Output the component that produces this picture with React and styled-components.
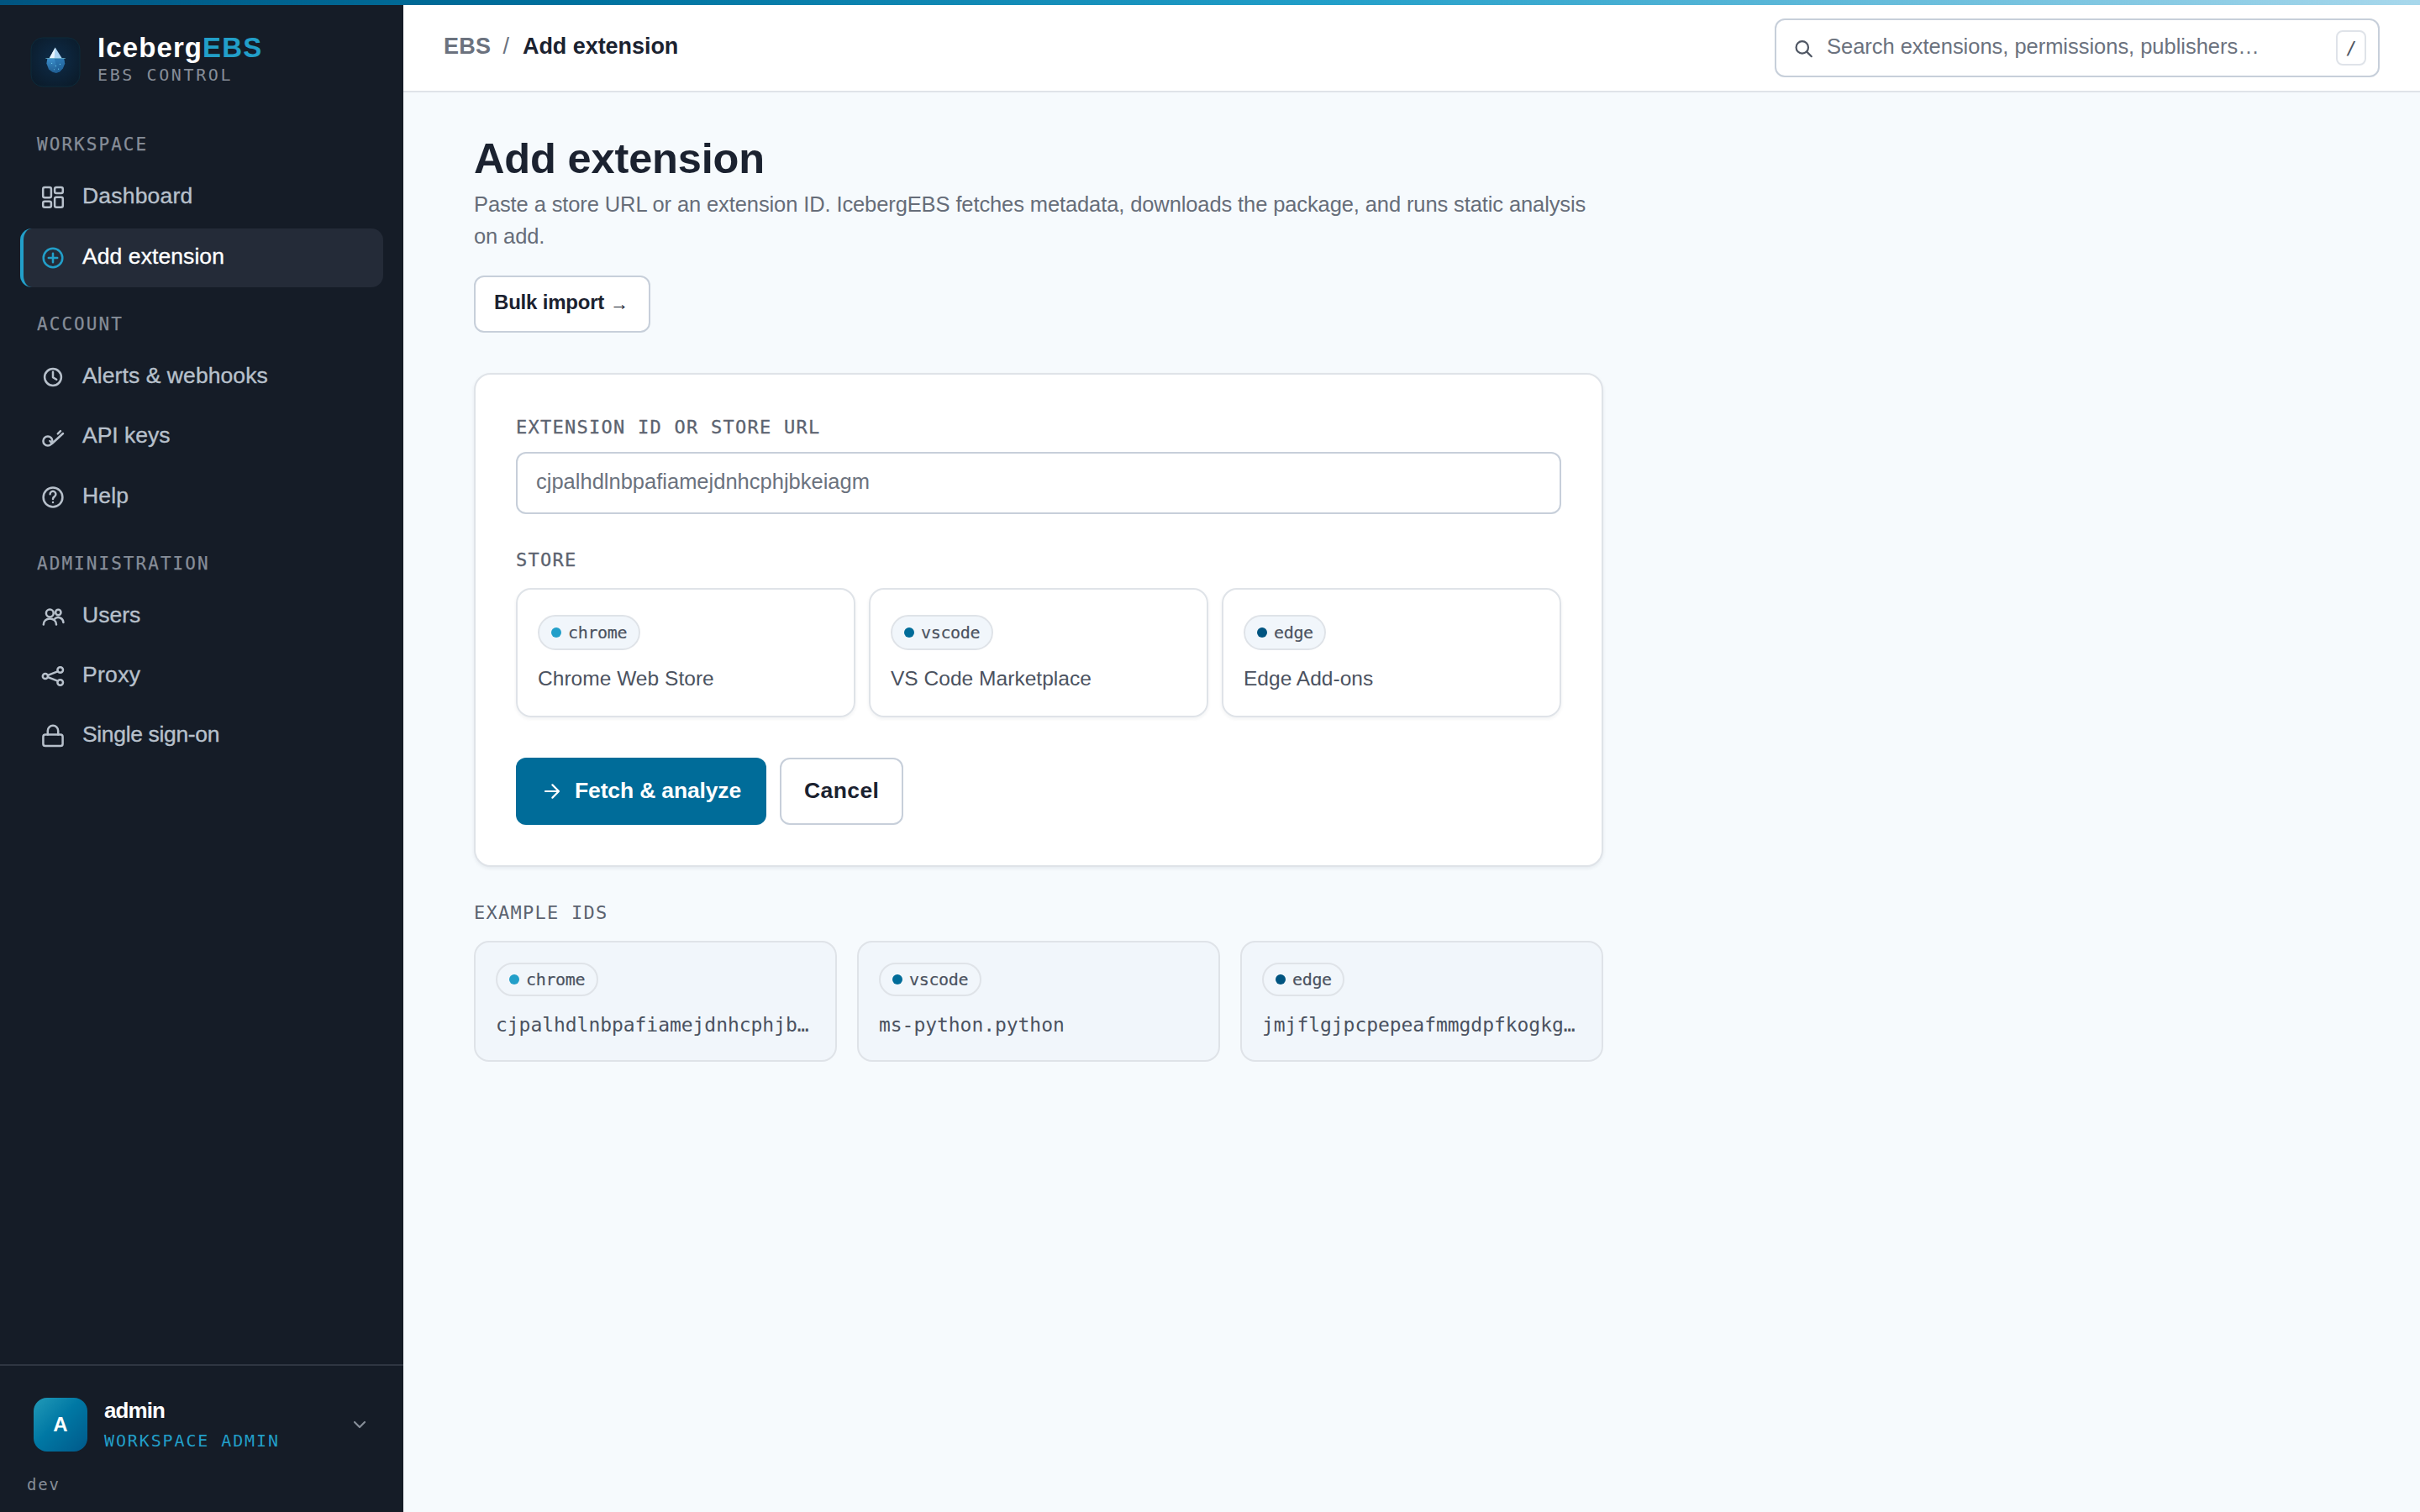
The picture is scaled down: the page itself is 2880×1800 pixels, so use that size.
import React from "react";
import styled, { createGlobalStyle, css } from "styled-components";

const sans = `"Liberation Sans", Arial, sans-serif`;
const mono = `"DejaVu Sans Mono", "Liberation Mono", monospace`;

const GlobalStyle = createGlobalStyle`
  *, *::before, *::after { box-sizing: border-box; }
  body { margin: 0; background: #f6fafd; font-family: ${sans}; color: #1b2230; }
  button, input { font-family: inherit; }
`;

const Page = styled.div`
  display: flex;
  flex-direction: column;
  width: 2880px;
  height: 1800px;
  overflow: hidden;
`;

const AccentBar = styled.div`
  flex: none;
  height: 6px;
  background: linear-gradient(90deg, #005480 0%, #0073a0 25%, #229fc9 55%, #a8d8ec 100%);
`;

const Shell = styled.div`
  flex: 1;
  display: grid;
  grid-template-columns: 480px 1fr;
  min-height: 0;
`;

const Sidebar = styled.aside`
  display: flex;
  flex-direction: column;
  background: #151c27;
`;

const Brand = styled.div`
  display: flex;
  gap: 20px;
  height: 151px;
  padding: 32px 36px 0;
`;

const LogoSlot = styled.div`
  padding-top: 6px;
  svg { display: block; }
`;

const BrandName = styled.div`
  font-size: 33px;
  line-height: 38px;
  font-weight: 700;
  letter-spacing: 1.1px;
  color: #ffffff;
  span { color: #229fc9; }
`;

const BrandSub = styled.div`
  font-family: ${mono};
  font-size: 20px;
  line-height: 26px;
  letter-spacing: 2.6px;
  color: #868d98;
`;

const NavSection = styled.nav`
  display: flex;
  flex-direction: column;
  gap: 1.2px;
  padding: 0 24px;
  margin-bottom: 29.2px;
`;

const NavLabel = styled.div`
  padding-left: 20px;
  margin-bottom: 12.2px;
  font-family: ${mono};
  font-size: 21px;
  line-height: 30px;
  height: 30px;
  letter-spacing: 2.05px;
  color: #868d98;
  -webkit-text-stroke: 0.25px currentColor;
`;

const NavItem = styled.a`
  display: flex;
  align-items: center;
  gap: 19px;
  height: 70px;
  padding-left: 19px;
  border-left: 4px solid ${(p) => (p.$active ? "#229fc9" : "transparent")};
  border-radius: 14px;
  background: ${(p) => (p.$active ? "#242b38" : "transparent")};
  color: ${(p) => (p.$active ? "#ffffff" : "#b7c0cb")};
  svg { color: ${(p) => (p.$active ? "#229fc9" : "#b7c0cb")}; }
`;

const NavText = styled.span`
  padding-bottom: 4px;
  font-size: 26.5px;
  line-height: 36px;
  letter-spacing: ${(p) => p.$track}px;
  -webkit-text-stroke: 0.35px currentColor;
`;

const SidebarFooter = styled.div`
  margin-top: auto;
  height: 176px;
  border-top: 2px solid #2f3642;
  padding: 38px 0 0 32px;
`;

const UserRow = styled.div`
  display: flex;
  align-items: center;
  gap: 20px;
  height: 64px;
  padding: 0 44px 0 8px;
`;

const Avatar = styled.div`
  display: grid;
  place-items: center;
  width: 64px;
  height: 64px;
  border-radius: 16px;
  background: linear-gradient(135deg, #229ab8 0%, #0078a4 45%, #00598a 100%);
  color: #ffffff;
  font-size: 24px;
  font-weight: 700;
`;

const UserText = styled.div`
  flex: 1;
`;

const UserName = styled.div`
  font-size: 26px;
  line-height: 30px;
  font-weight: 700;
  letter-spacing: -0.9px;
  color: #ffffff;
  padding-bottom: 8px;
`;

const UserRole = styled.div`
  font-family: ${mono};
  font-size: 20px;
  line-height: 26px;
  letter-spacing: 1.88px;
  color: #229fc9;
`;

const Version = styled.div`
  margin-top: 27px;
  font-family: ${mono};
  font-size: 19px;
  line-height: 24px;
  letter-spacing: 1.8px;
  color: #868d98;
`;

const Content = styled.div`
  display: flex;
  flex-direction: column;
  min-width: 0;
`;

const Header = styled.header`
  display: flex;
  align-items: center;
  justify-content: space-between;
  height: 104px;
  padding: 0 48px;
  background: #ffffff;
  border-bottom: 2px solid #dfe3e9;
`;

const Breadcrumb = styled.div`
  display: flex;
  padding-bottom: 4px;
  font-size: 27px;
  line-height: 36px;
  font-weight: 700;
  color: #6b727e;
`;

const Crumb = styled.span`
  letter-spacing: ${(p) => (p.$current ? "-0.05px" : "0.3px")};
  color: ${(p) => (p.$current ? "#1b2230" : "#6b727e")};
`;

const CrumbDivider = styled.span`
  font-weight: 400;
  padding: 0 16px 0 14px;
`;

const SearchBox = styled.div`
  display: flex;
  align-items: center;
  width: 720px;
  height: 70px;
  padding: 0 14px 0 22px;
  border: 2px solid #c7cfda;
  border-radius: 12px;
  background: #ffffff;
  color: #4f5663;
`;

const SearchText = styled.span`
  flex: 1;
  padding: 0 0 4px 14px;
  font-size: 25.5px;
  line-height: 36px;
  letter-spacing: -0.03px;
  color: #6b727e;
`;

const Kbd = styled.span`
  display: grid;
  place-items: center;
  width: 36px;
  height: 42px;
  border: 2px solid #dfe3e9;
  border-radius: 8px;
  font-family: ${mono};
  font-size: 22px;
  color: #4f5663;
`;

const Main = styled.main`
  width: 1428px;
  padding: 48px 0 0 84px;
`;

const Title = styled.h1`
  margin: 0;
  font-size: 50.5px;
  line-height: 62px;
  font-weight: 700;
  letter-spacing: -0.15px;
`;

const Description = styled.p`
  margin: 4px 0 28px;
  font-size: 25.5px;
  line-height: 38px;
  letter-spacing: -0.11px;
  color: #666d79;
`;

const outlined = css`
  border: 2px solid #c7cfda;
  background: #ffffff;
  color: #1b2230;
`;

const Button = styled.button`
  display: inline-flex;
  align-items: center;
  height: ${(p) => (p.$small ? 68 : 80)}px;
  padding: ${(p) => (p.$small ? "0 24.5px 4px 22px" : "0 27px 2px")};
  border-radius: 12px;
  font-size: ${(p) => (p.$small ? 24 : 26.5)}px;
  font-weight: 700;
  letter-spacing: ${(p) => p.$track || 0}px;
  ${(p) =>
    p.$primary
      ? css`
          border: 0;
          padding: 0 30px 2px 32px;
          background: #006c99;
          color: #ffffff;
        `
      : outlined}
  svg { margin: 2px 16px 0 0; }
`;

const ArrowGlyph = styled.span`
  margin: 4px 0 0 7px;
  font-size: 22px;
  line-height: 22px;
  font-weight: 400;
`;

const Card = styled.section`
  display: flex;
  flex-direction: column;
  height: 588px;
  margin-top: 48px;
  padding: 48px;
  border: 2px solid #dfe3e8;
  border-radius: 20px;
  background: #ffffff;
  box-shadow: 0 2px 4px rgba(20, 30, 50, 0.07);
`;

const FieldLabel = styled.div`
  font-family: ${mono};
  font-size: 22px;
  line-height: 30px;
  letter-spacing: 1.25px;
  color: #5c6370;
  -webkit-text-stroke: ${(p) => (p.$light ? 0 : 0.3)}px currentColor;
`;

const TextField = styled.div`
  display: flex;
  align-items: center;
  height: 74px;
  margin: 14px 0 40px;
  padding: 0 22px 4px;
  border: 2px solid #c7cfda;
  border-radius: 12px;
  font-size: 25.5px;
  letter-spacing: 0;
  color: #6b727e;
`;

const StoreGrid = styled.div`
  display: grid;
  grid-template-columns: repeat(3, 1fr);
  gap: 16px;
  margin: 18px 0 48px;
`;

const StoreCard = styled.div`
  height: 154px;
  padding: 30px 24px 0;
  border: 2px solid #dfe3e8;
  border-radius: 18px;
  box-shadow: 0 2px 4px rgba(20, 30, 50, 0.06);
`;

const StoreName = styled.div`
  margin-top: 15px;
  font-size: 24.5px;
  line-height: 38px;
  letter-spacing: 0.03px;
  color: #4b5260;
`;

const Pill = styled.div`
  display: flex;
  align-items: center;
  gap: 8px;
  width: fit-content;
  height: ${(p) => (p.$compact ? 40 : 42)}px;
  padding: 0 13.5px 0 14px;
  border: 2px solid #dfe3e8;
  border-radius: 21px;
  background: #f1f6fb;
  font-family: ${mono};
  font-size: 20px;
  letter-spacing: -0.35px;
  color: #4b5260;
  -webkit-text-stroke: 0.2px currentColor;
  &::before {
    content: "";
    width: 12px;
    height: 12px;
    border-radius: 50%;
    background: ${(p) => p.$dot};
  }
`;

const Actions = styled.div`
  display: flex;
  gap: 16px;
`;

const Examples = styled.section`
  margin-top: 40px;
`;

const ExampleGrid = styled.div`
  display: grid;
  grid-template-columns: repeat(3, 1fr);
  gap: 24px;
  margin-top: 18px;
`;

const ExampleCard = styled.div`
  height: 144px;
  padding: 24px;
  border: 2px solid #dfe3e8;
  border-radius: 18px;
  background: #f1f6fb;
`;

const ExampleId = styled.div`
  margin-top: 17px;
  font-family: ${mono};
  font-size: 23px;
  line-height: 34px;
  letter-spacing: -0.05px;
  white-space: nowrap;
  color: #4b5260;
`;

const Icon = ({ children, size = 32, width = 2.5 }) => (
  <svg
    width={size}
    height={size}
    viewBox={`0 0 ${size} ${size}`}
    fill="none"
    stroke="currentColor"
    strokeWidth={width}
    strokeLinecap="round"
    strokeLinejoin="round"
  >
    {children}
  </svg>
);

const icons = {
  dashboard: (
    <>
      <rect x="4.2" y="4.1" width="9.7" height="12.1" rx="2" />
      <rect x="18.1" y="4.1" width="9.7" height="7" rx="2" />
      <rect x="18.1" y="15.7" width="9.7" height="12.1" rx="2" />
      <rect x="4.2" y="20.8" width="9.7" height="7" rx="2" />
    </>
  ),
  add: (
    <>
      <circle cx="16" cy="16" r="11.3" />
      <path d="M16 10.8v10.4M10.8 16h10.4" />
    </>
  ),
  clock: (
    <>
      <circle cx="16" cy="16" r="9.9" />
      <path d="M16 9.8v6.4l4.2 2.6" />
    </>
  ),
  key: (
    <>
      <circle cx="9.9" cy="21" r="5.5" />
      <path d="M12.4 21l2.6 3L28 12M21.8 12.4l3.2-3.2" />
    </>
  ),
  help: (
    <>
      <circle cx="16" cy="16" r="11.4" />
      <path d="M12.6 12.2a3.4 3.4 0 1 1 5.2 2.9c-1.2.8-1.8 1.4-1.8 3M16 22v.1" />
    </>
  ),
  users: (
    <>
      <circle cx="12.3" cy="12" r="4.4" />
      <circle cx="22.3" cy="11" r="3.2" />
      <path d="M4.8 25.4a7.6 7 0 0 1 15.2 0M18.4 18.4a6.2 6.2 0 0 1 10 4.6" />
    </>
  ),
  proxy: (
    <>
      <circle cx="6.9" cy="16" r="3.1" />
      <circle cx="24.7" cy="8.5" r="3.3" />
      <circle cx="24.7" cy="23.5" r="3.3" />
      <path d="M10 14.9l11.5-4.6M10 17.1l11.5 4.6" />
    </>
  ),
  lock: (
    <>
      <rect x="4.4" y="14.6" width="23.2" height="13.4" rx="2.6" />
      <path d="M9.8 14.6V10a6.2 6.2 0 0 1 12.4 0v4.6" />
    </>
  ),
};

const Logo = () => (
  <svg width="60" height="60" viewBox="0 0 60 60">
    <defs>
      <radialGradient id="tile" cx="50%" cy="45%" r="65%">
        <stop offset="0" stopColor="#0e2c49" />
        <stop offset="1" stopColor="#0b1b2a" />
      </radialGradient>
      <linearGradient id="deep" x1="0" y1="0" x2="0" y2="1">
        <stop offset="0" stopColor="#3b8ecb" />
        <stop offset="1" stopColor="#1f5c90" />
      </linearGradient>
    </defs>
    <rect x="1" y="1" width="58" height="58" rx="14" fill="url(#tile)" stroke="#0d2a3a" />
    <path d="M29.7 12.5L37.8 25.4H22.6z" fill="#a9d3f2" />
    <path d="M29.7 12.5L28.6 25.4H22.6z" fill="#e8f5fd" />
    <path d="M20.4 25.6H40L41.2 31.5L38.8 37.4L35 41.6L30.7 43L26.4 41.8L22 38.4L19.4 31.5z" fill="url(#deep)" />
    <path d="M28.6 25.6L31 34L30.7 43L35 41.6L38.8 37.4L41.2 31.5L40 25.6z" fill="#1c5f98" opacity="0.45" />
    <path d="M18.4 25.5h23.4" stroke="#6cb3c9" strokeWidth="1" opacity="0.75" />
    <g fill="#6fd0ee">
      <circle cx="25.6" cy="31.4" r="0.6" />
      <circle cx="30.4" cy="34.6" r="0.7" />
      <circle cx="35.4" cy="32.4" r="0.6" />
      <circle cx="28.4" cy="38.8" r="0.5" />
      <circle cx="33.6" cy="38.2" r="0.6" />
    </g>
  </svg>
);

const nav = [
  {
    label: "WORKSPACE",
    items: [
      { icon: "dashboard", text: "Dashboard", track: 0.2 },
      { icon: "add", text: "Add extension", track: 0.08 },
    ],
  },
  {
    label: "ACCOUNT",
    items: [
      { icon: "clock", text: "Alerts & webhooks", track: 0.08 },
      { icon: "key", text: "API keys", track: 0 },
      { icon: "help", text: "Help", track: 0.2 },
    ],
  },
  {
    label: "ADMINISTRATION",
    items: [
      { icon: "users", text: "Users", track: 0 },
      { icon: "proxy", text: "Proxy", track: 0.3 },
      { icon: "lock", text: "Single sign-on", track: -0.35 },
    ],
  },
];

const stores = [
  { id: "chrome", dot: "#229fc9", name: "Chrome Web Store", example: "cjpalhdlnbpafiamejdnhcphjb…" },
  { id: "vscode", dot: "#006c99", name: "VS Code Marketplace", example: "ms-python.python" },
  { id: "edge", dot: "#005480", name: "Edge Add-ons", example: "jmjflgjpcpepeafmmgdpfkogkg…" },
];

export default function App() {
  return (
    <>
      <GlobalStyle />
      <Page>
        <AccentBar />
        <Shell>
          <Sidebar>
            <Brand>
              <LogoSlot>
                <Logo />
              </LogoSlot>
              <div>
                <BrandName>
                  Iceberg<span>EBS</span>
                </BrandName>
                <BrandSub>EBS CONTROL</BrandSub>
              </div>
            </Brand>
            {nav.map((section) => (
              <NavSection key={section.label}>
                <NavLabel>{section.label}</NavLabel>
                {section.items.map((item) => (
                  <NavItem key={item.text} $active={item.icon === "add"}>
                    <Icon>{icons[item.icon]}</Icon>
                    <NavText $track={item.track}>{item.text}</NavText>
                  </NavItem>
                ))}
              </NavSection>
            ))}
            <SidebarFooter>
              <UserRow>
                <Avatar>A</Avatar>
                <UserText>
                  <UserName>admin</UserName>
                  <UserRole>WORKSPACE ADMIN</UserRole>
                </UserText>
                <svg width="16" height="10" viewBox="0 0 16 10" fill="none" stroke="#868d98" strokeWidth="2.2" strokeLinecap="round" strokeLinejoin="round">
                  <path d="M2 2l6 6 6-6" />
                </svg>
              </UserRow>
              <Version>dev</Version>
            </SidebarFooter>
          </Sidebar>
          <Content>
            <Header>
              <Breadcrumb>
                <Crumb>EBS</Crumb>
                <CrumbDivider>/</CrumbDivider>
                <Crumb $current>Add extension</Crumb>
              </Breadcrumb>
              <SearchBox>
                <Icon size={24} width={2.2}>
                  <circle cx="8.8" cy="11.4" r="7.2" />
                  <path d="M14.2 16.6l5.6 5.6" />
                </Icon>
                <SearchText>Search extensions, permissions, publishers…</SearchText>
                <Kbd>/</Kbd>
              </SearchBox>
            </Header>
            <Main>
              <Title>Add extension</Title>
              <Description>
                Paste a store URL or an extension ID. IcebergEBS fetches metadata, downloads the
                package, and runs static analysis on add.
              </Description>
              <Button $small $track={-0.2}>
                Bulk import <ArrowGlyph>→</ArrowGlyph>
              </Button>
              <Card>
                <FieldLabel>EXTENSION ID OR STORE URL</FieldLabel>
                <TextField>cjpalhdlnbpafiamejdnhcphjbkeiagm</TextField>
                <FieldLabel>STORE</FieldLabel>
                <StoreGrid>
                  {stores.map((s) => (
                    <StoreCard key={s.id}>
                      <Pill $dot={s.dot}>{s.id}</Pill>
                      <StoreName>{s.name}</StoreName>
                    </StoreCard>
                  ))}
                </StoreGrid>
                <Actions>
                  <Button $primary $track={-0.15}>
                    <Icon size={22} width={2.2}>
                      <path d="M3 11h16M11.4 3.4L19 11l-7.6 7.6" />
                    </Icon>
                    Fetch &amp; analyze
                  </Button>
                  <Button $track={0.4}>Cancel</Button>
                </Actions>
              </Card>
              <Examples>
                <FieldLabel $light>EXAMPLE IDS</FieldLabel>
                <ExampleGrid>
                  {stores.map((s) => (
                    <ExampleCard key={s.id}>
                      <Pill $compact $dot={s.dot}>{s.id}</Pill>
                      <ExampleId>{s.example}</ExampleId>
                    </ExampleCard>
                  ))}
                </ExampleGrid>
              </Examples>
            </Main>
          </Content>
        </Shell>
      </Page>
    </>
  );
}
